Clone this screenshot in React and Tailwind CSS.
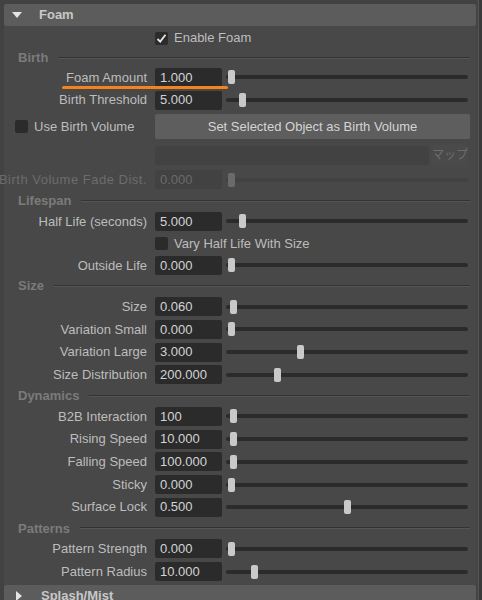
import React from "react";

const font = { fontFamily: '"Liberation Sans", "Noto Sans CJK JP", Arial, sans-serif' };

function Checkbox({ checked }) {
  return (
    <div className="w-[13px] h-[13px] rounded-[2px] bg-[#2b2b2b] flex items-center justify-center shrink-0">
      {checked && (
        <svg width="11" height="11" viewBox="0 0 11 11">
          <path d="M1.5 6 L4.2 8.6 L9.5 1.8" fill="none" stroke="#e6e6e6" strokeWidth="1.8" />
        </svg>
      )}
    </div>
  );
}

function Section({ title, h = "h-[19px]" }) {
  return (
    <div className={`${h} shrink-0 flex items-center pl-[14px] pr-[6px]`}>
      <span className="text-[13px] font-semibold text-[#7b7b7b] leading-none">{title}</span>
      <div className="flex-1 ml-[10px] border-t border-[#333333] border-b-[#555555] border-b h-[2px]" />
    </div>
  );
}

function Slider({ thumb, disabled }) {
  return (
    <div className="relative ml-[4px] w-[242px] h-[14px] flex items-center">
      <div className={`w-full h-[4px] rounded-full ${disabled ? "bg-[#424242]" : "bg-[#2b2b2b]"}`} />
      <div
        className={`absolute top-0 w-[7px] h-[14px] rounded-[2px] ${disabled ? "bg-[#6a6a6a]" : "bg-[#c9c9c9]"}`}
        style={{ left: thumb - 226 - 3.5 }}
      />
    </div>
  );
}

function FieldRow({ label, value, thumb, disabled, wide, h = "h-[22.7px]" }) {
  return (
    <div className={`${h} shrink-0 flex items-center`}>
      <div className="w-[147px] flex justify-end pr-[4px]">
        <span
          className={`whitespace-nowrap text-[13px] ${wide ? "tracking-[0.5px]" : ""} ${
            disabled ? "text-[#6c6c6c]" : "text-[#bdbdbd]"
          }`}
        >
          {label}
        </span>
      </div>
      <div
        className={`ml-[4px] w-[67px] h-[19px] rounded-[2px] flex items-center pl-[5px] text-[13px] ${
          disabled ? "bg-[#424242] text-[#6a6a6a]" : "bg-[#2b2b2b] text-[#d4d4d4]"
        }`}
      >
        {value}
      </div>
      <Slider thumb={thumb} disabled={disabled} />
    </div>
  );
}

function CheckRow({ label, checked, indent, h = "h-[22px]" }) {
  return (
    <div className={`${h} shrink-0 flex items-center`} style={{ paddingLeft: indent }}>
      <Checkbox checked={checked} />
      <span className="ml-[6px] text-[13px] text-[#bdbdbd] whitespace-nowrap">{label}</span>
    </div>
  );
}

export default function App() {
  return (
    <div className="w-[482px] h-[600px] bg-[#424242] overflow-hidden flex" style={font}>
      <div className="w-[476px] pl-[4px] pt-[4px] flex flex-col relative">
        {/* Foam header */}
        <div className="h-[22px] shrink-0 bg-[#5c5c5c] rounded-[2px] flex items-center">
          <svg width="10" height="6" viewBox="0 0 10 6" className="ml-[8px]">
            <path d="M0 0 L10 0 L5 6 Z" fill="#e4e4e4" />
          </svg>
          <span className="ml-[17px] text-[13px] font-semibold text-[#c8c8c8]">Foam</span>
        </div>

        <div className="bg-[#484848] flex flex-col shrink-0 pt-[1px]">
          <CheckRow label="Enable Foam" checked indent={151} />

          <Section title="Birth" h="h-[17px]" />
          <FieldRow label="Foam Amount" value="1.000" thumb={231} />
          <FieldRow label="Birth Threshold" value="5.000" thumb={242} />

          <div className="h-[31px] shrink-0 flex items-center">
            <div className="w-[151px] flex items-center pl-[11px]">
              <Checkbox />
              <span className="ml-[6px] text-[13px] text-[#bdbdbd] whitespace-nowrap">Use Birth Volume</span>
            </div>
            <button className="w-[315px] h-[25px] rounded-[2px] bg-[#5e5e5e] text-[13px] text-[#d4d4d4]">
              Set Selected Object as Birth Volume
            </button>
          </div>

          <div className="h-[26px] shrink-0 flex items-center pl-[151px]">
            <div className="w-[274px] h-[19px] rounded-[2px] bg-[#424242]" />
            <div className="ml-[3px] w-[36px] h-[23px] rounded-[2px] bg-[#4a4a4a] flex items-center justify-center whitespace-nowrap text-[12px] text-[#6c6c6c]">
              マップ
            </div>
          </div>

          <FieldRow label="Birth Volume Fade Dist." value="0.000" thumb={231} disabled wide h="h-[23px]" />

          <Section title="Lifespan" />
          <FieldRow label="Half Life (seconds)" value="5.000" thumb={242} h="h-[22px]" />
          <CheckRow label="Vary Half Life With Size" indent={151} />
          <FieldRow label="Outside Life" value="0.000" thumb={231} h="h-[22px]" />

          <Section title="Size" />
          <FieldRow label="Size" value="0.060" thumb={233} />
          <FieldRow label="Variation Small" value="0.000" thumb={231} />
          <FieldRow label="Variation Large" value="3.000" thumb={300} />
          <FieldRow label="Size Distribution" value="200.000" thumb={277} />

          <Section title="Dynamics" />
          <FieldRow label="B2B Interaction" value="100" thumb={233} />
          <FieldRow label="Rising Speed" value="10.000" thumb={233} />
          <FieldRow label="Falling Speed" value="100.000" thumb={233} />
          <FieldRow label="Sticky" value="0.000" thumb={231} />
          <FieldRow label="Surface Lock" value="0.500" thumb={347} />

          <Section title="Patterns" />
          <FieldRow label="Pattern Strength" value="0.000" thumb={231} />
          <FieldRow label="Pattern Radius" value="10.000" thumb={254} />
          <div className="h-[2px]" />
        </div>

        {/* Splash/Mist header */}
        <div className="h-[22px] bg-[#5c5c5c] rounded-[2px] flex items-center shrink-0">
          <svg width="6" height="10" viewBox="0 0 6 10" className="ml-[12px]">
            <path d="M0 0 L6 5 L0 10 Z" fill="#e4e4e4" />
          </svg>
          <span className="ml-[19px] text-[13px] font-semibold text-[#c8c8c8]">Splash/Mist</span>
        </div>

        {/* highlight under Foam Amount */}
        <div className="absolute left-[62px] top-[86px] w-[166px] h-[3px] rounded-full bg-[#f5821f]" />
      </div>

      <div className="w-[6px] h-full flex">
        <div className="w-[2px] bg-[#444444]" />
        <div className="w-[1px] bg-[#575757]" />
        <div className="flex-1 bg-[#3a3a3a]" />
      </div>
    </div>
  );
}
